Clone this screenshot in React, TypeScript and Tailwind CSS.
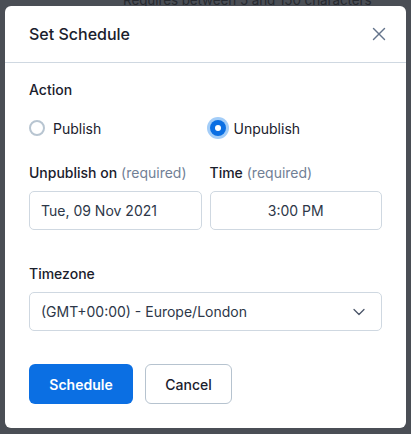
import React from "react";
import { X, ChevronDown } from "lucide-react";

const App = () => {
  return (
    <div className="h-[434px] w-full overflow-hidden bg-[#4a4e55] font-['Inter',sans-serif]">
      {/* page behind the overlay */}
      <div className="h-[6px] overflow-hidden">
        <p className="-mt-[10px] pl-[123px] text-[13.5px] leading-[20px] tracking-[-0.1px] text-[#26292f]">
          Requires between 5 and 150 characters
        </p>
      </div>

      <div className="mx-[5px] rounded-[6px] bg-white">
        <div className="flex h-[57px] items-center justify-between border-b border-[#cfd8e1] pl-6 pr-4">
          <h2 className="text-[16px] font-medium text-[#1a202c]">Set Schedule</h2>
          <button className="text-[#64748b]">
            <X size={22} strokeWidth={1.5} />
          </button>
        </div>

        <div className="px-6 pt-[17px] pb-6">
          <p className="text-[14px] font-medium leading-5 text-[#1a202c]">Action</p>

          <div className="mt-4 grid h-6 grid-cols-2 items-center gap-2">
            <label className="flex items-center gap-2 text-[14px] text-[#1a202c]">
              <span className="h-4 w-4 rounded-full border-2 border-[#b8c5d1] bg-white"></span>
              Publish
            </label>
            <label className="flex items-center gap-2 text-[14px] text-[#1a202c]">
              <span className="flex h-4 w-4 items-center justify-center rounded-full bg-[#0b6fe3] ring-[3px] ring-[#a3cdf8]">
                <span className="h-[6px] w-[6px] rounded-full bg-white"></span>
              </span>
              Unpublish
            </label>
          </div>

          <div className="mt-[23px] grid grid-cols-2 gap-2">
            <div>
              <p className="text-[14px] leading-5 text-[#1a202c]">
                <span className="font-medium">Unpublish on</span>{" "}
                <span className="text-[#718096]">(required)</span>
              </p>
              <div className="mt-2 flex h-[39px] items-center rounded-[5px] border border-[#cfd8e1] pl-[11px] text-[14px] text-[#2d3748]">
                Tue, 09 Nov 2021
              </div>
            </div>
            <div>
              <p className="text-[14px] leading-5 text-[#1a202c]">
                <span className="font-medium">Time</span>{" "}
                <span className="text-[#718096]">(required)</span>
              </p>
              <div className="mt-2 flex h-[39px] items-center justify-center rounded-[5px] border border-[#cfd8e1] text-[14px] text-[#2d3748]">
                3:00 PM
              </div>
            </div>
          </div>

          <p className="mt-[34px] text-[14px] font-medium leading-5 text-[#1a202c]">Timezone</p>
          <div className="mt-2 flex h-[39px] items-center justify-between rounded-[5px] border border-[#cfd8e1] pl-[11px] pr-3 text-[14px] text-[#2d3748]">
            <span>(GMT+00:00) - Europe/London</span>
            <ChevronDown size={20} strokeWidth={1.5} className="text-[#4a5568]" />
          </div>

          <div className="mt-[33px] flex gap-3">
            <button className="h-10 w-[104px] rounded-[6px] bg-[#0b6fe3] text-[14px] font-semibold text-white">
              Schedule
            </button>
            <button className="h-10 w-[87px] rounded-[6px] border border-[#b6c3cf] bg-white text-[14px] font-medium text-[#1a202c]">
              Cancel
            </button>
          </div>
        </div>
      </div>
    </div>
  );
};

export default App;
